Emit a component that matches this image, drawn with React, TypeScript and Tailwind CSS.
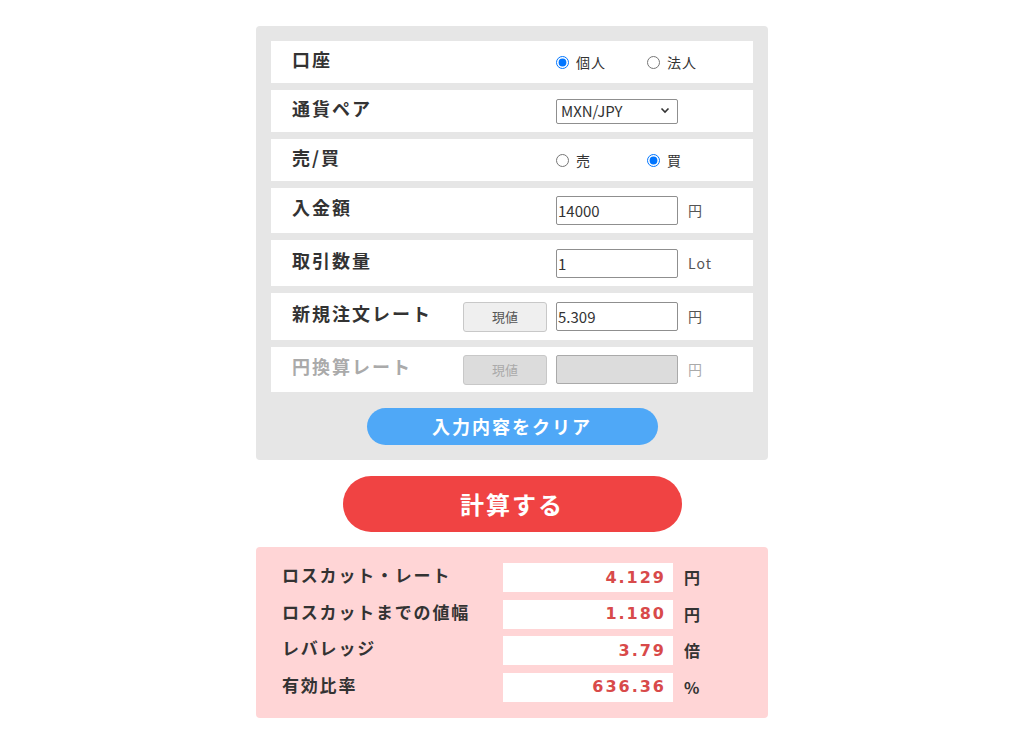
import { useState } from "react"

const jp = { fontFamily: '"Noto Sans CJK JP", "Noto Sans", sans-serif' }
const num = { fontFamily: '"DejaVu Sans", "Noto Sans CJK JP", sans-serif' }

function Radio({ checked, label, onChange }: { checked: boolean; label: string; onChange: () => void }) {
  return (
    <label className="flex w-[91px] cursor-pointer items-center gap-[7px] text-[14px] tracking-[1px] text-[#333]">
      <input type="radio" checked={checked} onChange={onChange} className="m-0 h-[13px] w-[13px] accent-[#0075ff]" />
      {label}
    </label>
  )
}

function Row({ label, disabled, h, children, button }: { label: string; disabled?: boolean; h: string; children: React.ReactNode; button?: boolean }) {
  return (
    <div className={`flex items-center bg-white pl-[21px] ${h}`}>
      <div className={`-mt-[6px] w-[171px] text-[18px] font-bold tracking-[2px] ${disabled ? "text-[#aaa]" : "text-[#333]"}`}>
        {label}
      </div>
      <div className="w-[93px]">
        {button && (
          <button
            disabled={disabled}
            className={`h-[30px] w-[84px] rounded-[3px] border text-[13px] ${
              disabled ? "border-[#c8c8c8] bg-[#dcdcdc] text-[#aaa]" : "border-[#c8c8c8] bg-[#efefef] text-[#555]"
            }`}
          >
            現値
          </button>
        )}
      </div>
      {children}
    </div>
  )
}

function Unit({ text, disabled }: { text: string; disabled?: boolean }) {
  return <span className={`ml-[10px] text-[14px] tracking-[1px] ${disabled ? "text-[#aaa]" : "text-[#555]"}`}>{text}</span>
}

function ResultRow({ label, value, unit }: { label: string; value: string; unit: string }) {
  return (
    <div className="flex h-[29px] items-center">
      <div className="-mt-[5px] w-[221px] text-[17px] font-bold tracking-[1.8px] text-[#333]">{label}</div>
      <div className="flex h-[29px] w-[170px] items-center justify-end bg-white pr-[7px]">
        <span style={num} className="text-[16px] font-bold tracking-[2px] text-[#d84a4a]">
          {value}
        </span>
      </div>
      <span className="ml-[11px] -mt-[1px] text-[16px] font-bold text-[#333]">{unit}</span>
    </div>
  )
}

export default function App() {
  const [account, setAccount] = useState("kojin")
  const [side, setSide] = useState("buy")
  const [deposit, setDeposit] = useState("14000")
  const [lot, setLot] = useState("1")
  const [rate, setRate] = useState("5.309")

  const inputCls =
    "h-[29px] w-[122px] rounded-[2px] border border-[#8f8f8f] bg-white px-[1px] text-[15px] text-[#333] outline-none"

  return (
    <div style={jp} className="min-h-screen bg-white pt-[26px]">
      <div className="mx-auto w-[512px]">
        <div className="rounded-[4px] bg-[#e6e6e6] px-[15px] pt-[15px] pb-[15px]">
          <div className="flex flex-col gap-[7px]">
            <Row label="口座" h="h-[42px]">
              <Radio label="個人" checked={account === "kojin"} onChange={() => setAccount("kojin")} />
              <Radio label="法人" checked={account === "hojin"} onChange={() => setAccount("hojin")} />
            </Row>
            <Row label="通貨ペア" h="h-[42px]">
              <div className="relative">
                <select className="h-[25px] w-[122px] appearance-none rounded-[2px] border border-[#8f8f8f] bg-white pl-[4px] text-[15px] text-[#333] outline-none">
                  <option>MXN/JPY</option>
                  <option>USD/JPY</option>
                  <option>EUR/JPY</option>
                </select>
                <svg className="pointer-events-none absolute top-[9px] right-[8px]" width="10" height="7" viewBox="0 0 10 7">
                  <path d="M1.5 1.5 L5 5 L8.5 1.5" fill="none" stroke="#333" strokeWidth="1.6" />
                </svg>
              </div>
            </Row>
            <Row label="売/買" h="h-[42px]">
              <Radio label="売" checked={side === "sell"} onChange={() => setSide("sell")} />
              <Radio label="買" checked={side === "buy"} onChange={() => setSide("buy")} />
            </Row>
            <Row label="入金額" h="h-[45px]">
              <input className={inputCls} value={deposit} onChange={(e) => setDeposit(e.target.value)} />
              <Unit text="円" />
            </Row>
            <Row label="取引数量" h="h-[46px]">
              <input className={inputCls} value={lot} onChange={(e) => setLot(e.target.value)} />
              <Unit text="Lot" />
            </Row>
            <Row label="新規注文レート" h="h-[47px]" button>
              <input className={inputCls} value={rate} onChange={(e) => setRate(e.target.value)} />
              <Unit text="円" />
            </Row>
            <Row label="円換算レート" h="h-[45px]" button disabled>
              <input disabled className="h-[29px] w-[122px] rounded-[2px] border border-[#aaa] bg-[#dcdcdc] outline-none" />
              <Unit text="円" disabled />
            </Row>
          </div>
          <div className="mt-[16px] flex justify-center">
            <button
              onClick={() => {
                setDeposit("")
                setLot("")
                setRate("")
              }}
              className="h-[37px] w-[291px] rounded-full bg-[#4fa8f7] text-[18px] font-bold tracking-[2px] text-white"
            >
              入力内容をクリア
            </button>
          </div>
        </div>

        <div className="mt-[16px] flex justify-center">
          <button className="h-[56px] w-[339px] rounded-full bg-[#f04343] text-[24px] font-bold tracking-[2px] text-white">
            計算する
          </button>
        </div>

        <div className="mt-[15px] flex flex-col gap-[7.5px] rounded-[4px] bg-[#ffd5d6] pt-[16px] pb-[16px] pl-[26px]">
          <ResultRow label="ロスカット・レート" value="4.129" unit="円" />
          <ResultRow label="ロスカットまでの値幅" value="1.180" unit="円" />
          <ResultRow label="レバレッジ" value="3.79" unit="倍" />
          <ResultRow label="有効比率" value="636.36" unit="%" />
        </div>
      </div>
    </div>
  )
}
